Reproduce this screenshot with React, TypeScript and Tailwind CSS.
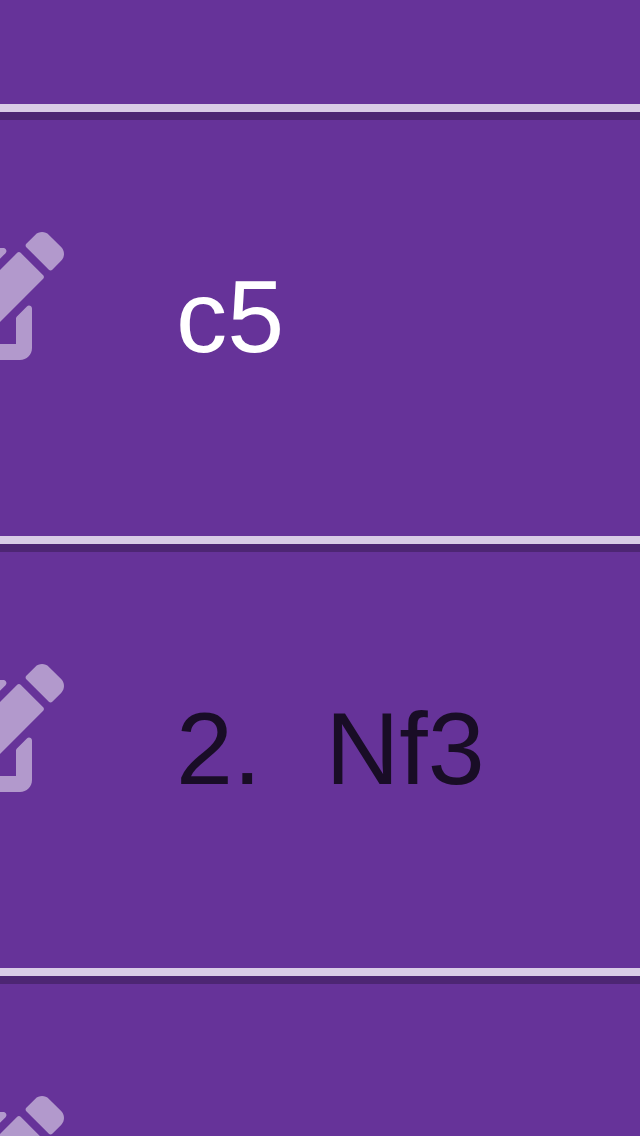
import React from "react";
import { FaEdit } from "react-icons/fa";

function Row({ children, className = "" }: { children?: React.ReactNode; className?: string }) {
  return (
    <div className={"flex h-[432px] shrink-0 border-t-8 border-[#d9cce6] " + className}>
      <div className="flex w-full border-t-8 border-[#4d2673]">
        <div className="flex w-16 shrink-0 justify-end pt-[104px]">
          <FaEdit className="h-36 w-36 shrink-0 text-[#b299cc]" />
        </div>
        <div className="ml-28 mt-[138px] flex gap-16 text-[102.4px] leading-[117px]">{children}</div>
      </div>
    </div>
  );
}

export default function App() {
  return (
    <main className="flex h-[1136px] w-[640px] flex-col overflow-hidden bg-[#663399] pt-[104px] font-['Liberation_Sans',sans-serif]">
      <Row className="text-white">
        <span>c5</span>
      </Row>
      <Row className="text-[#190d26]">
        <span>2.</span>
        <span>Nf3</span>
      </Row>
      <Row />
    </main>
  );
}
